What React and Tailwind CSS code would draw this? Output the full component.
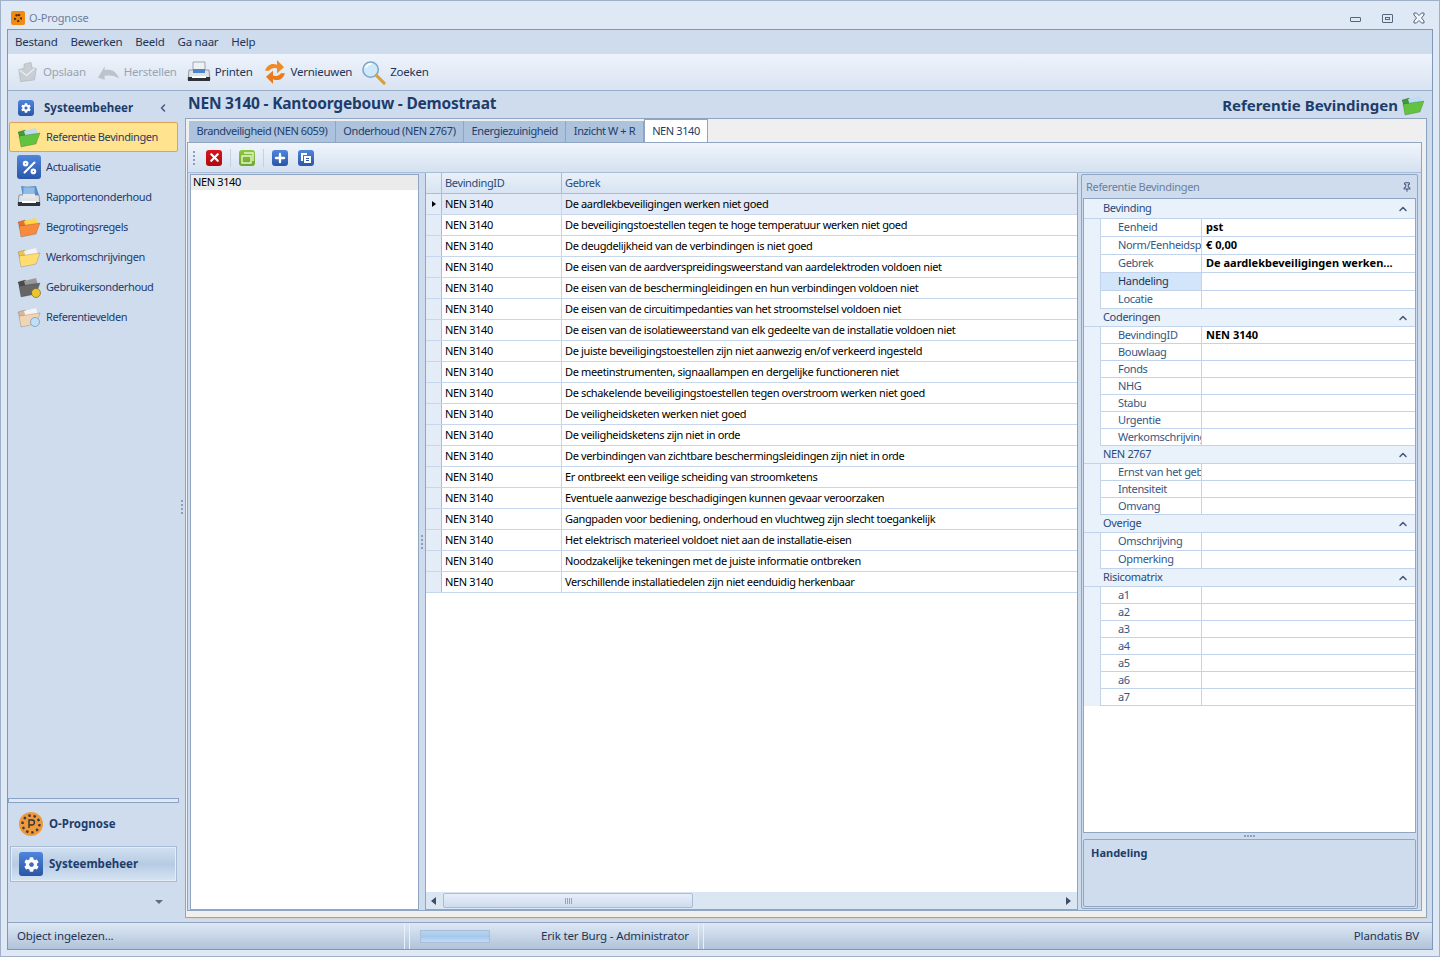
import React from 'react';
import { FaCog } from 'react-icons/fa';
import { ChevronLeft, ChevronUp, Percent, Pin, Plus, X } from 'lucide-react';

const ui = "font-['Noto_Sans',sans-serif]";
const bold = "font-['Noto_Sans',sans-serif] font-bold";

const ROWS = [
  'De aardlekbeveiligingen werken niet goed',
  'De beveiligingstoestellen tegen te hoge temperatuur werken niet goed',
  'De deugdelijkheid van de verbindingen is niet goed',
  'De eisen van de aardverspreidingsweerstand van aardelektroden voldoen niet',
  'De eisen van de beschermingleidingen en hun verbindingen voldoen niet',
  'De eisen van de circuitimpedanties van het stroomstelsel voldoen niet',
  'De eisen van de isolatieweerstand van elk gedeelte van de installatie voldoen niet',
  'De juiste beveiligingstoestellen zijn niet aanwezig en/of verkeerd ingesteld',
  'De meetinstrumenten, signaallampen en dergelijke functioneren niet',
  'De schakelende beveiligingstoestellen tegen overstroom werken niet goed',
  'De veiligheidsketen werken niet goed',
  'De veiligheidsketens zijn niet in orde',
  'De verbindingen van zichtbare beschermingsleidingen zijn niet in orde',
  'Er ontbreekt een veilige scheiding van stroomketens',
  'Eventuele aanwezige beschadigingen kunnen gevaar veroorzaken',
  'Gangpaden voor bediening, onderhoud en vluchtweg zijn slecht toegankelijk',
  'Het elektrisch materieel voldoet niet aan de installatie-eisen',
  'Noodzakelijke tekeningen met de juiste informatie ontbreken',
  'Verschillende installatiedelen zijn niet eenduidig herkenbaar',
];

const TABS = ['Brandveiligheid (NEN 6059)', 'Onderhoud (NEN 2767)', 'Energiezuinigheid', 'Inzicht W + R'];

const PROPS = [
  { cat: 'Bevinding', h: 20, rows: [['Eenheid', 'pst', 18], ['Norm/Eenheidsprijs', '€ 0,00', 18], ['Gebrek', 'De aardlekbeveiligingen werken...', 18], ['Handeling', '', 18, true], ['Locatie', '', 18]] },
  { cat: 'Coderingen', h: 18, rows: [['BevindingID', 'NEN 3140', 17], ['Bouwlaag', '', 17], ['Fonds', '', 17], ['NHG', '', 17], ['Stabu', '', 17], ['Urgentie', '', 17], ['Werkomschrijving', '', 17]] },
  { cat: 'NEN 2767', h: 18, rows: [['Ernst van het gebrek', '', 17], ['Intensiteit', '', 17], ['Omvang', '', 17]] },
  { cat: 'Overige', h: 18, rows: [['Omschrijving', '', 18], ['Opmerking', '', 18]] },
  { cat: 'Risicomatrix', h: 18, rows: [['a1', '', 17], ['a2', '', 17], ['a3', '', 17], ['a4', '', 17], ['a5', '', 17], ['a6', '', 17], ['a7', '', 17]] },
];

const Folder = ({ back, front, paper = '#ffffff', size = 24, children }) => (
  <svg viewBox="0 0 24 24" width={size} height={size} className="shrink-0">
    <path d="M1 7l7-2 2 2 8-2 1 7-14 8z" fill={back} stroke="#00000050" strokeWidth=".5" />
    <path d="M7 6l12-3 2 7-12 3z" fill={paper} />
    <path d="M2 11l21-3-4 11-15 3z" fill={front} stroke="#00000050" strokeWidth=".5" />
    {children}
  </svg>
);

const SquareIcon = ({ className, children }) => (
  <span className={`flex items-center justify-center rounded-[3px] bg-gradient-to-b ${className}`}>{children}</span>
);

const CogIcon = ({ box = 'h-6 w-6', size = 14 }) => (
  <SquareIcon className={`from-[#4f86dc] to-[#2a56a8] ${box}`}><FaCog size={size} color="#fff" /></SquareIcon>
);

const PrinterIcon = ({ folder }) => (
  <svg viewBox="0 0 24 24" width="24" height="24" className="shrink-0">
    {folder && <path d="M4 1l6 1 9-1 3 9-16 2z" fill="#4d8fd8" />}
    <path d="M6 2h12v8H6z" fill={folder ? '#8dbbea' : '#eef1f4'} stroke="#7f8a96" strokeWidth=".7" />
    <path d="M2 10h20l1 10H1z" fill="#dfe3e8" stroke="#6f7a86" strokeWidth=".7" />
    <path d="M6 9h12v4H6z" fill={folder ? '#e4e8ec' : '#4b86c8'} />
    <path d="M1 17h22v4H1z" fill="#2e3338" />
    <path d="M5 16h14v2H5z" fill="#fff" />
  </svg>
);

const RefreshIcon = () => (
  <svg viewBox="2 2 20 20" width="20" height="24" preserveAspectRatio="none" className="shrink-0">
    <path d="M2 11c2-5 7-7 12-5V2l7 6-7 5V9c-3-1-6 0-8 2z" fill="#f08a24" />
    <path d="M22 13c-2 5-7 7-12 5v4l-7-6 7-5v4c3 1 6 0 8-2z" fill="#ea7a1c" />
  </svg>
);

const SearchIcon = () => (
  <svg viewBox="0 0 26 26" width="25" height="25" className="shrink-0">
    <circle cx="10" cy="10" r="8" fill="#cfe8fa" stroke="#7ea6c8" strokeWidth="1.6" />
    <path d="M5 8c1-3 3-4 6-4" stroke="#fff" strokeWidth="2" fill="none" />
    <path d="M16 16l8 8" stroke="#d8a038" strokeWidth="3.2" strokeLinecap="round" />
  </svg>
);

const SaveIcon = () => (
  <svg viewBox="0 0 24 24" width="21" height="24" className="shrink-0">
    <path d="M2 9l6-1V3l8-2 1 6 5 1-2 13-16 2z" fill="#c9ced4" stroke="#aab1b9" strokeWidth=".7" />
    <path d="M3 10l8 6 9-8" fill="none" stroke="#eceff2" strokeWidth="1.2" />
  </svg>
);

const UndoIcon = () => (
  <svg viewBox="0 0 24 24" width="23" height="24" className="shrink-0">
    <path d="M1 18L8 6v4c7-1 12 1 15 9-4-3-8-4-15-3v4z" fill="#bcc3cb" />
  </svg>
);

const PrognoseIcon = ({ size = 24 }) => (
  <svg viewBox="0 0 24 24" width={size} height={size} className="shrink-0">
    <circle cx="12" cy="12" r="12" fill="#ee9a3c" />
    <circle cx="12" cy="12" r="8.5" fill="none" stroke="#3a3a4a" strokeWidth="2.4" strokeDasharray="2.4 2.9" />
    <path d="M10 16V8h3a2 2 0 010 5h-3" fill="none" stroke="#333" strokeWidth="1.4" />
  </svg>
);

const NavItem = ({ icon, label, active }) => (
  <div className={`flex h-[30px] items-center gap-[5px] rounded-[2px] pl-[7px] text-[11px] tracking-[-0.4px] text-[#1d3d6b] ${active ? 'border border-[#dca25a] bg-[#ffe38e]' : 'border border-transparent'}`}>
    <span className="flex h-6 w-6 items-center justify-center">{icon}</span>
    <span>{label}</span>
  </div>
);

const ToolButton = ({ icon, label, disabled, gap }) => (
  <div className={`flex items-center text-[11.5px] tracking-[-0.25px] ${gap} ${disabled ? 'text-[#9aa4b0]' : 'text-[#1d3557]'}`}>
    {icon}
    <span>{label}</span>
  </div>
);

const Grip = ({ className }) => (
  <div className={`flex flex-col gap-[2px] ${className}`}>
    {[0, 1, 2, 3].map((i) => <span key={i} className="h-[2px] w-[2px] bg-[#8aa0bd]" />)}
  </div>
);

const PropSection = ({ cat, h, rows }) => (
  <div>
    <div style={{ height: h }} className="flex items-center justify-between border-b border-[#c2d4ec] bg-[#e9f1fb] pl-[19px] pr-[6px] text-[#2a4a78]">
      <span>{cat}</span>
      <ChevronUp size={12} strokeWidth={3} color="#44587a" />
    </div>
    {rows.map(([name, value, rh, sel]) => (
      <div key={name} style={{ height: rh }} className="flex bg-[#e9f1fb] pl-[16px]">
        <div className={`flex w-[102px] items-center overflow-hidden whitespace-nowrap border-b border-l border-r border-[#c2d4ec] pl-[17px] ${sel ? 'bg-[#d3e5fa] text-[#1d3557]' : 'bg-white text-[#345784]'}`}>{name}</div>
        <div className={`flex flex-1 items-center border-b border-[#c2d4ec] bg-white pl-[4px] text-[11px] tracking-normal text-black ${bold}`}>{value}</div>
      </div>
    ))}
  </div>
);

export default function App() {
  return (
    <div className={`flex h-[957px] w-[1440px] flex-col overflow-hidden border border-[#9fb0c8] bg-[#dfe9f5] px-[6px] pb-[6px] ${ui}`}>
      {/* Title bar */}
      <div className="flex h-[28px] shrink-0 items-center pt-[6px] text-[11px] tracking-[-0.2px] text-[#6b7f9c]">
        <span className="ml-[4px] flex h-[14px] w-[14px] items-center justify-center rounded-[2px] bg-[#f28a10]">
          <span className="h-[8px] w-[8px] rounded-full border-2 border-dotted border-[#4a2a08]" />
        </span>
        <span className="ml-[4px]">O-Prognose</span>
        <div className="ml-auto mr-[8px] flex items-center">
          <span className="mt-[3px] h-[5px] w-[11px] rounded-[1px] border border-[#55657c]" />
          <span className="ml-[21px] flex h-[9px] w-[11px] items-center justify-center rounded-[1px] border border-[#55657c]"><span className="h-[3px] w-[5px] border border-[#55657c]" /></span>
          <svg viewBox="0 0 12 12" width="12" height="12" className="ml-[20px]">
            <path d="M1 1h2.5L6 3.500 8.500 1H11v2L8.500 6 11 9v2H8.500L6 8.500 3.500 11H1V9l2.500-3L1 3z" fill="#f1f5fa" stroke="#55657c" />
          </svg>
        </div>
      </div>

      <div className="flex min-h-0 flex-1 flex-col border border-[#7d97b8]">
        {/* Menu */}
        <div className="flex h-[24px] shrink-0 items-center gap-[13px] bg-[#cfdcee] pl-[7px] text-[11.5px] tracking-[-0.25px] text-[#1d3557]">
          {['Bestand', 'Bewerken', 'Beeld', 'Ga naar', 'Help'].map((m) => <span key={m}>{m}</span>)}
        </div>

        {/* Toolbar */}
        <div className="flex h-[37px] shrink-0 items-center border-b border-[#98aeca] bg-gradient-to-b from-[#edf3fb] to-[#d9e4f2] pl-[9px]">
          <ToolButton disabled gap="gap-[5px]" icon={<SaveIcon />} label="Opslaan" />
          <span className="w-[11px]" />
          <ToolButton disabled gap="gap-[4px]" icon={<UndoIcon />} label="Herstellen" />
          <span className="w-[10px]" />
          <ToolButton gap="gap-[4px]" icon={<PrinterIcon />} label="Printen" />
          <span className="w-[12px]" />
          <ToolButton gap="gap-[6px]" icon={<RefreshIcon />} label="Vernieuwen" />
          <span className="w-[9px]" />
          <ToolButton gap="gap-[4px]" icon={<SearchIcon />} label="Zoeken" />
        </div>

        {/* Body */}
        <div className="flex min-h-0 flex-1 bg-[#cfdcee]">
          {/* Sidebar */}
          <div className="flex w-[171px] shrink-0 flex-col">
            <div className="flex h-[31px] shrink-0 items-center pl-[10px] pr-[10px] pt-[3px]">
              <CogIcon box="h-[16px] w-[16px]" size={10} />
              <span className={`ml-[10px] text-[11.5px] text-[#1d3d6b] ${bold}`}>Systeembeheer</span>
              <ChevronLeft size={12} strokeWidth={3} color="#44587a" className="ml-auto" />
            </div>
            <div className="flex flex-col px-[1px]">
              <NavItem active label="Referentie Bevindingen" icon={<Folder back="#3f9a3a" front="#63c23f" paper="#bcdcf5" />} />
              <NavItem label="Actualisatie" icon={<SquareIcon className="h-6 w-6 from-[#4f86dc] to-[#2a56a8]"><Percent size={17} strokeWidth={3} color="#fff" /></SquareIcon>} />
              <NavItem label="Rapportenonderhoud" icon={<PrinterIcon folder />} />
              <NavItem label="Begrotingsregels" icon={<Folder back="#e8702c" front="#f78a3c" paper="#ffd84a" />} />
              <NavItem label="Werkomschrijvingen" icon={<Folder back="#e8c550" front="#ffdd70" paper="#f4f4f4" />} />
              <NavItem label="Gebruikersonderhoud" icon={<Folder back="#4a4a4a" front="#666666" paper="#999999"><circle cx="19" cy="18" r="4.500" fill="#ecc42e" stroke="#6b5a10" strokeWidth=".6" /></Folder>} />
              <NavItem label="Referentievelden" icon={<Folder back="#d9b896" front="#f0d4b4" paper="#f4f4f4"><circle cx="18" cy="17" r="4.500" fill="#bfe0f4" stroke="#6e9cc0" strokeWidth=".8" /></Folder>} />
            </div>
            <div className="mt-auto h-[5px] shrink-0 border border-[#8aa3c4] bg-[#dde8f5]" />
            <div className="flex h-[43px] shrink-0 items-center pb-[2px] pl-[11px]">
              <PrognoseIcon />
              <span className={`ml-[6px] text-[11.5px] text-[#1d3d6b] ${bold}`}>O-Prognose</span>
            </div>
            <div className="mx-[2px] flex h-[36px] shrink-0 items-center border border-[#a8bcd6] bg-gradient-to-b from-[#d3e1f1] via-[#b6cbe3] to-[#d6e4f3] pl-[8px] outline outline-1 -outline-offset-2 outline-[#e4edf7]">
              <CogIcon size={15} />
              <span className={`ml-[6px] text-[11.5px] text-[#1d3d6b] ${bold}`}>Systeembeheer</span>
            </div>
            <div className="flex h-[40px] shrink-0 items-center justify-end pr-[16px]">
              <span className="border-x-[4px] border-t-[4px] border-x-transparent border-t-[#5d6f88]" />
            </div>
          </div>

          {/* Sidebar splitter */}
          <div className="flex w-[6px] shrink-0 items-center justify-center"><Grip /></div>

          {/* Content */}
          <div className="flex min-w-0 flex-1 flex-col pr-[5px]">
            <div className="flex h-[27px] shrink-0 items-center justify-between pl-[3px] pr-[2px] text-[#1d3d6b]">
              <span className={`-mt-[2px] text-[15.5px] tracking-[-0.2px] ${bold}`}>NEN 3140 - Kantoorgebouw - Demostraat</span>
              <span className={`flex items-center gap-[3px] pt-[1px] text-[15px] ${bold}`}>
                Referentie Bevindingen
                <Folder back="#3f9a3a" front="#63c23f" paper="#bcdcf5" />
              </span>
            </div>

            <div className="mb-[4px] flex min-h-0 flex-1 flex-col border border-[#8fa5c2] bg-[#efefef] shadow-[1px_1px_0_#d9d5cc]">
              {/* Tabs */}
              <div className="flex h-[23px] shrink-0 items-end pl-[3px] text-[11px] tracking-[-0.4px]">
                {TABS.map((t) => (
                  <div key={t} className="flex h-[21px] items-center border-r border-[#8fa5c2] bg-[#adc2dc] px-[7.5px] text-[#1d3d6b]">{t}</div>
                ))}
                <div className="flex h-[23px] items-center border border-b-0 border-[#8fa5c2] bg-white px-[7.5px] text-[#1d3d6b]">NEN 3140</div>
              </div>

              {/* Tab page */}
              <div className="mb-[6px] ml-[1px] mr-[4px] flex min-h-0 flex-1 flex-col border border-[#8fa5c2] bg-[#cfdcee]">
                <div className="flex h-[30px] shrink-0 items-center gap-[4px] border-b border-[#a9bdd8] bg-gradient-to-b from-[#eff5fc] to-[#d5e1f0] pl-[5px]">
                  <Grip className="mr-[7px]" />
                  <SquareIcon className="h-[16px] w-[16px] from-[#d8141c] to-[#b00a10]"><X size={13} strokeWidth={4} color="#fff" /></SquareIcon>
                  <span className="mx-[4px] h-[18px] w-px bg-[#c3d1e4]" />
                  <SquareIcon className="h-[16px] w-[16px] from-[#8dc63f] to-[#6fa82a]">
                    <svg viewBox="0 0 16 16" width="16" height="16"><path d="M5 3h9v8M3 6h9v7H3z" fill="none" stroke="#e6f3d0" strokeWidth="1.4" /></svg>
                  </SquareIcon>
                  <span className="mx-[4px] h-[18px] w-px bg-[#c3d1e4]" />
                  <SquareIcon className="h-[16px] w-[16px] from-[#4f86dc] to-[#2a56a8]"><Plus size={14} strokeWidth={4} color="#fff" /></SquareIcon>
                  <span className="w-[2px]" />
                  <SquareIcon className="h-[16px] w-[16px] from-[#4f86dc] to-[#2a56a8]">
                    <svg viewBox="0 0 16 16" width="16" height="16"><path d="M3 3h6v2H5v6H3z" fill="#fff" /><path d="M6 6h7v7H6z" fill="#fff" /><path d="M8 8.500h3M8 10.500h3" stroke="#2a56a8" /></svg>
                  </SquareIcon>
                </div>

                <div className="flex min-h-0 flex-1 pl-[2px]">
                  {/* Tree */}
                  <div className="mt-[1px] w-[229px] shrink-0 border border-[#8fa5c2] bg-white text-[11px] tracking-[-0.36px] text-black">
                    <div className="flex h-[15px] items-center bg-[#ebebeb] pl-[2px]">NEN 3140</div>
                  </div>

                  <div className="flex w-[6px] shrink-0 items-center justify-center"><Grip /></div>

                  {/* Grid */}
                  <div className="flex min-w-0 w-[653px] shrink-0 flex-col border-x border-b border-[#8fa5c2] bg-white text-[11px] tracking-[-0.36px] text-black">
                    <div className="flex h-[21px] shrink-0 border-b border-[#a9bdd8] bg-gradient-to-b from-[#e9f0f9] to-[#d8e4f2] text-[#2a4a78]">
                      <div className="w-[16px] border-r border-[#a9bdd8]" />
                      <div className="flex w-[120px] items-center border-r border-[#a9bdd8] pl-[3px]">BevindingID</div>
                      <div className="flex flex-1 items-center pl-[3px]">Gebrek</div>
                    </div>
                    <div className="min-h-0 flex-1">
                      {ROWS.map((r, i) => (
                        <div key={r} className={`flex h-[21px] border-b border-[#c6d6ec] ${i === 0 ? 'bg-[#e1eaf6]' : ''}`}>
                          <div className="flex w-[16px] items-center justify-center border-r border-[#a9bdd8] bg-[#e3ecf7]">
                            {i === 0 && <span className="border-y-[3.5px] border-l-[4px] border-y-transparent border-l-black" />}
                          </div>
                          <div className="flex w-[120px] items-center border-r border-[#c6d6ec] pl-[3px]">NEN 3140</div>
                          <div className="flex flex-1 items-center whitespace-nowrap pl-[3px]">{r}</div>
                        </div>
                      ))}
                    </div>
                    {/* Horizontal scrollbar */}
                    <div className="flex h-[17px] shrink-0 items-center bg-[#dbe6f3]">
                      <span className="ml-[5px] border-y-[4px] border-r-[5px] border-y-transparent border-r-[#3c4d68]" />
                      <div className="ml-[7px] flex h-[15px] w-[250px] items-center justify-center gap-px rounded-[2px] border border-[#a9bdd8] bg-gradient-to-b from-[#e6eef8] to-[#cfdcee]">
                        {[0, 1, 2, 3].map((i) => <span key={i} className="h-[6px] w-px bg-[#93a6c0]" />)}
                      </div>
                      <span className="ml-auto mr-[6px] border-y-[4px] border-l-[5px] border-y-transparent border-l-[#3c4d68]" />
                    </div>
                  </div>

                  {/* Properties */}
                  <div className="mb-[1px] ml-[3px] mr-[3px] mt-[1px] flex min-w-0 flex-1 flex-col rounded-[2px] border border-[#8fa5c2] p-px text-[11px] tracking-[-0.33px]">
                    <div className="flex h-[22px] shrink-0 items-center justify-between pl-[3px] pr-[4px] text-[#6b7f9c]">
                      <span>Referentie Bevindingen</span>
                      <Pin size={10} strokeWidth={2.5} color="#44587a" />
                    </div>
                    <div className="min-h-0 flex-1 border border-[#8fa5c2] bg-white">
                      {PROPS.map((s) => <PropSection key={s.cat} {...s} />)}
                    </div>
                    <div className="flex h-[6px] shrink-0 items-center justify-center gap-[1px]">
                      {[0, 1, 2, 3].map((i) => <span key={i} className="h-[2px] w-[2px] bg-[#8aa0bd]" />)}
                    </div>
                    <div className={`h-[68px] shrink-0 rounded-[2px] border border-[#8fa5c2] pl-[7px] pt-[5px] text-[11px] tracking-normal text-[#1d3d6b] ${bold}`}>Handeling</div>
                  </div>
                </div>
              </div>
            </div>
          </div>
        </div>

        {/* Status bar */}
        <div className="flex h-[27px] shrink-0 items-center border-t border-[#8fa5c2] bg-gradient-to-b from-[#dde8f5] to-[#b2c3d9] text-[11.5px] tracking-[-0.15px] text-[#1d3557]">
          <span className="w-[396px] pl-[9px]">Object ingelezen...</span>
          <span className="h-full w-[6px] border-x border-[#e9f0f8]" />
          <span className="ml-[10px] h-[13px] w-[70px] border border-[#a9bdd8] bg-gradient-to-b from-[#b9d4f0] via-[#a3c8ee] to-[#c4dbf3]" />
          <span className="ml-[51px]">Erik ter Burg - Administrator</span>
          <span className="ml-[9px] h-full w-[6px] border-x border-[#e9f0f8]" />
          <span className="ml-auto pr-[13px]">Plandatis BV</span>
        </div>
      </div>
    </div>
  );
}
